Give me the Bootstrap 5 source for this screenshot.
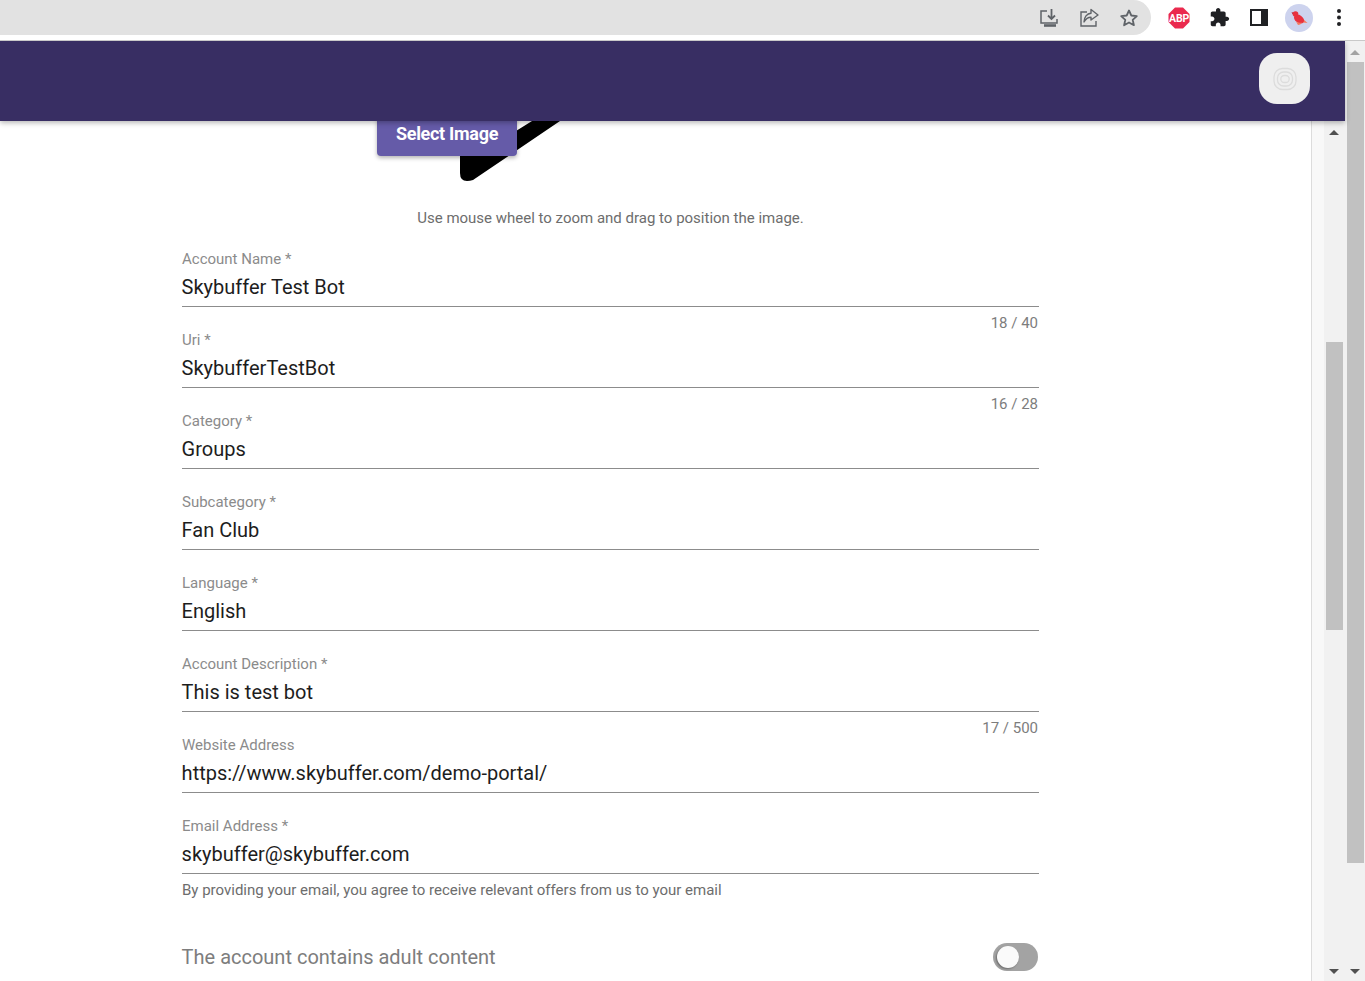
<!DOCTYPE html>
<html lang="en">
<head>
    <meta charset="UTF-8">
    <meta name="viewport" content="width=device-width, initial-scale=1.0">
    <title>Create Account</title>
    <link href="https://cdn.jsdelivr.net/npm/bootstrap@5.3.0/dist/css/bootstrap.min.css" rel="stylesheet">
    <style>
        html, body { height: 100%; overflow: hidden; }
        body { font-family: Roboto, "Liberation Sans", sans-serif; background: #fff; }

        .shell { height: 981px; }
        .browser-bar { height: 41px; flex: none; background: #fff; border-bottom: 1px solid #c9c9c9; }
        .omnibox { width: 1151px; height: 35px; background: #e2e2e2; border-radius: 0 18px 18px 0; padding-right: 2px; }
        .ext-icons { padding-left: 8px; height: 35px; }
        .tool-btn { width: 40px; height: 35px; }
        .avatar-dot { width: 28px; height: 28px; border-radius: 50%; background: #cdd3ee; }

        .app-head { height: 80px; flex: none; background: #382e63; box-shadow: 0 2px 5px rgba(0,0,0,.28); z-index: 5; padding-right: 35px; }
        .app-logo { width: 51px; height: 51px; border-radius: 18px; background: #efefef; margin-bottom: 5px; }

        .form-scroll { width: 1312px; border-right: 1px solid #dcdcdc; overflow: hidden; }
        .gutter { width: 12px; background: #f8f8f8; }
        .sb-track { background: #f1f1f1; width: 21px; position: relative; }
        .sb-outer { width: 20px; }
        .sb-thumb { background: #c1c1c1; width: 17px; margin-left: 2px; }
        .sb-inner-thumb { height: 288px; margin-top: 221px; }
        .sb-outer-thumb { height: 801px; margin-top: 21px; }
        .sb-up, .sb-down { position: absolute; left: 5px; width: 0; height: 0; border-left: 5px solid transparent; border-right: 5px solid transparent; }
        .sb-up { border-bottom: 5px solid #505050; top: 9px; }
        .sb-down { border-top: 5px solid #505050; bottom: 7px; }
        .sb-up.dim { border-bottom-color: #a3a3a3; }

        .form-col { width: 857px; margin-left: 182px; }
        .crop-area { height: 85px; position: relative; }
        .crop-shape { position: absolute; left: 278px; top: 0; }
        .select-btn { position: absolute; left: 195px; top: -15px; width: 140px; height: 50px; padding-top: 5px; background: #655ba8; color: #fff; font-size: 18px; font-weight: 700; letter-spacing: -.3px; border: 0; border-radius: 0 0 4px 4px; box-shadow: 0 2px 4px rgba(0,0,0,.3); }
        .crop-hint { font-size: 15px; color: #6d6d6d; text-align: center; line-height: 20px; height: 45px; padding-top: 2px; }

        .field-row { height: 81px; }
        .field-label { font-size: 15px; line-height: 16px; color: #8b8b8b; }
        .field-value { font-size: 20px; line-height: 26px; color: #1d1d1d; margin-top: 7px; border-bottom: 1px solid #8c8c8c; height: 33px; text-indent: -.4px; }
        .field-count { font-size: 15px; line-height: 18px; color: #7d7d7d; text-align: right; margin-top: 7px; padding-right: 1px; }
        .field-note { font-size: 15px; line-height: 18px; color: #6d6d6d; margin-top: 7px; }
        .adult-row { margin-top: 43px; font-size: 20px; color: #7d7d7d; height: 30px; text-indent: -.4px; }
        .toggle-track { width: 45px; height: 28px; border-radius: 14px; background: #a3a3a3; position: relative; margin-right: 1px; }
        .toggle-knob { position: absolute; left: 4px; top: 3px; width: 22px; height: 22px; border-radius: 50%; background: #fafafa; box-shadow: -1px 1px 2px rgba(0,0,0,.35); }
    </style>
</head>
<body>
<div class="shell d-flex flex-column">
    <!-- browser toolbar -->
    <div class="browser-bar d-flex">
        <div class="omnibox d-flex justify-content-end">
            <div class="tool-btn d-flex align-items-center justify-content-center">
                <svg width="20" height="20" viewBox="0 0 20 20" fill="none" stroke="#5f6368" stroke-width="1.5"><path d="M8 3H2v12h16v-4"/><path d="M12.5 1v10M9 7.5l3.5 3.5L16 7.5" stroke-width="1.8"/><path d="M5 17.5h12" stroke-width="2.6"/></svg>
            </div>
            <div class="tool-btn d-flex align-items-center justify-content-center">
                <svg width="20" height="20" viewBox="0 0 20 20" fill="none" stroke="#5f6368" stroke-width="1.4"><path d="M8 4H2v14h15v-5"/><path d="M12 1.500l7 5.500-7 5V9.300c-3 0-5 1.200-7 4.700 0-5 3-8.500 7-8.800z" stroke-linejoin="round"/></svg>
            </div>
            <div class="tool-btn d-flex align-items-center justify-content-center">
                <svg width="20" height="20" viewBox="0 0 20 20" fill="none" stroke="#5f6368" stroke-width="1.8" stroke-linejoin="round"><path d="M10 2.500l2.300 5 5.500.6-4.100 3.700 1.200 5.400L10 14.500l-4.900 2.700 1.200-5.400L2.200 8.100l5.500-.6z"/></svg>
            </div>
        </div>
        <div class="ext-icons d-flex">
            <div class="tool-btn d-flex align-items-center justify-content-center">
                <svg width="22" height="22" viewBox="0 0 22 22"><polygon points="7,0.5 15,0.5 21.5,7 21.5,15 15,21.5 7,21.5 0.5,15 0.5,7" fill="#ea2a4e"/><text x="11" y="15" text-anchor="middle" font-family="Roboto, sans-serif" font-size="10.5" font-weight="700" letter-spacing="-.2" fill="#fff">ABP</text></svg>
            </div>
            <div class="tool-btn d-flex align-items-center justify-content-center">
                <svg width="21" height="21" viewBox="0 0 24 24" fill="#202124"><path d="M20.500 11H19V7c0-1.100-.9-2-2-2h-4V3.500C13 2.120 11.880 1 10.500 1S8 2.120 8 3.500V5H4c-1.100 0-1.990.9-1.990 2v3.800H3.500c1.490 0 2.700 1.210 2.700 2.700s-1.210 2.700-2.700 2.700H2V20c0 1.100.9 2 2 2h3.800v-1.500c0-1.490 1.210-2.700 2.700-2.700 1.490 0 2.700 1.210 2.700 2.700V22H17c1.100 0 2-.9 2-2v-4h1.500c1.380 0 2.500-1.120 2.500-2.500S21.880 11 20.500 11z"/></svg>
            </div>
            <div class="tool-btn d-flex align-items-center justify-content-center">
                <svg width="18" height="17" viewBox="0 0 18 17"><rect width="18" height="17" fill="#202124"/><rect x="2" y="2" width="9" height="13" fill="#fff"/></svg>
            </div>
            <div class="tool-btn d-flex align-items-center justify-content-center">
                <div class="avatar-dot d-flex align-items-center justify-content-center">
                    <svg width="18" height="18" viewBox="0 0 18 18"><path d="M13 13.500l4.500.5-5.500-5z" fill="#f4795f"/><ellipse cx="9" cy="10" rx="5.500" ry="3.800" transform="rotate(35 9 10)" fill="#e8323f"/><circle cx="5.500" cy="5" r="2.800" fill="#e8323f"/><path d="M3.200 3.600L1.500 3.300l1.400 2.200z" fill="#b5202c"/><path d="M6 12.500q3 2 6 1-1.500 2.500-4 2.500z" fill="#f4795f"/></svg>
                </div>
            </div>
            <div class="tool-btn d-flex align-items-center justify-content-center">
                <svg width="4" height="17" viewBox="0 0 4 17" fill="#202124"><circle cx="2" cy="2" r="2"/><circle cx="2" cy="8.500" r="2"/><circle cx="2" cy="15" r="2"/></svg>
            </div>
        </div>
    </div>

    <div class="d-flex flex-grow-1 overflow-hidden">
        <div class="d-flex flex-column flex-grow-1">
            <!-- app header -->
            <div class="app-head d-flex align-items-center justify-content-end">
                <div class="app-logo d-flex align-items-center justify-content-center">
                    <svg width="24" height="24" viewBox="0 0 24 24" fill="none" stroke="#dcdcdc" stroke-width="1.300"><rect x="1" y="1.500" width="22" height="21" rx="8.500"/><rect x="4.500" y="5" width="15" height="14" rx="6"/><rect x="7.800" y="8.500" width="8.400" height="7" rx="3.500"/></svg>
                </div>
            </div>

            <div class="d-flex flex-grow-1 overflow-hidden">
                <div class="form-scroll">
                    <div class="form-col">
                        <!-- image cropper -->
                        <div class="crop-area">
                            <svg class="crop-shape" width="100" height="62" viewBox="0 0 100 62"><path d="M0 20V52q0 8 7 8 3 0 6-1L100 0H72L40 20z" fill="#000"/></svg>
                            <button class="select-btn" type="button">Select Image</button>
                        </div>
                        <div class="crop-hint">Use mouse wheel to zoom and drag to position the image.</div>

                        <div class="field-row">
                            <div class="field-label">Account Name *</div>
                            <div class="field-value">Skybuffer Test Bot</div>
                            <div class="field-count">18 / 40</div>
                        </div>
                        <div class="field-row">
                            <div class="field-label">Uri *</div>
                            <div class="field-value">SkybufferTestBot</div>
                            <div class="field-count">16 / 28</div>
                        </div>
                        <div class="field-row">
                            <div class="field-label">Category *</div>
                            <div class="field-value">Groups</div>
                        </div>
                        <div class="field-row">
                            <div class="field-label">Subcategory *</div>
                            <div class="field-value">Fan Club</div>
                        </div>
                        <div class="field-row">
                            <div class="field-label">Language *</div>
                            <div class="field-value">English</div>
                        </div>
                        <div class="field-row">
                            <div class="field-label">Account Description *</div>
                            <div class="field-value">This is test bot</div>
                            <div class="field-count">17 / 500</div>
                        </div>
                        <div class="field-row">
                            <div class="field-label">Website Address</div>
                            <div class="field-value">https://www.skybuffer.com/demo-portal/</div>
                        </div>
                        <div class="field-row">
                            <div class="field-label">Email Address *</div>
                            <div class="field-value">skybuffer@skybuffer.com</div>
                            <div class="field-note">By providing your email, you agree to receive relevant offers from us to your email</div>
                        </div>

                        <div class="adult-row d-flex justify-content-between align-items-center">
                            <span>The account contains adult content</span>
                            <div class="toggle-track"><div class="toggle-knob"></div></div>
                        </div>
                    </div>
                </div>
                <div class="gutter"></div>
                <!-- inner scrollbar -->
                <div class="sb-track">
                    <span class="sb-up"></span>
                    <div class="sb-thumb sb-inner-thumb"></div>
                    <span class="sb-down"></span>
                </div>
            </div>
        </div>
        <!-- window scrollbar -->
        <div class="sb-track sb-outer">
            <span class="sb-up dim"></span>
            <div class="sb-thumb sb-outer-thumb"></div>
            <span class="sb-down"></span>
        </div>
    </div>
</div>
<script src="https://cdn.jsdelivr.net/npm/bootstrap@5.3.0/dist/js/bootstrap.bundle.min.js"></script>
</body>
</html>
